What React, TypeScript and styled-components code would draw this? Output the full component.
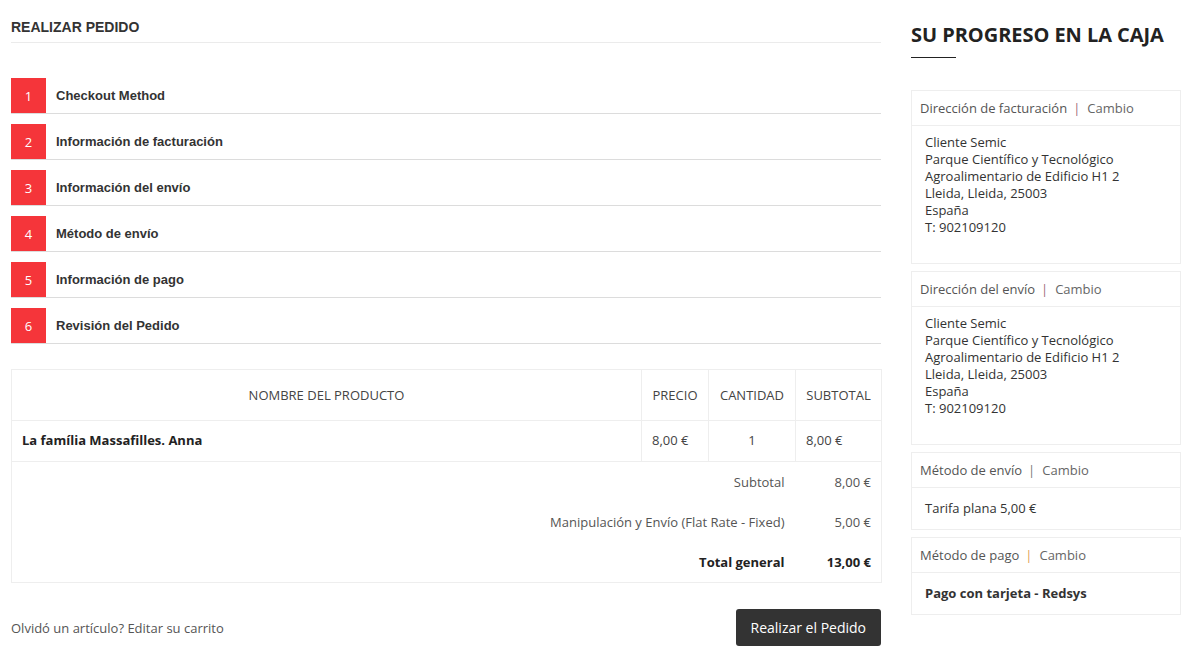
import React from 'react';
import styled, { createGlobalStyle } from 'styled-components';

const GlobalStyle = createGlobalStyle`
  body {
    margin: 0;
    background: #fff;
    font-family: 'Open Sans', 'Liberation Sans', sans-serif;
    font-size: 13px;
    color: #333;
  }
`;

const steps = [
  'Checkout Method',
  'Información de facturación',
  'Información del envío',
  'Método de envío',
  'Información de pago',
  'Revisión del Pedido',
];

const address = [
  'Cliente Semic',
  'Parque Científico y Tecnológico',
  'Agroalimentario de Edificio H1 2',
  'Lleida, Lleida, 25003',
  'España',
  'T: 902109120',
];

const App = () => (
  <>
    <GlobalStyle />
    <Page>
      <Main>
        <PageTitle>Realizar Pedido</PageTitle>
        <Steps>
          {steps.map((label, i) => (
            <Step key={label}>
              <StepNumber>{i + 1}</StepNumber>
              <StepTitle>{label}</StepTitle>
            </Step>
          ))}
        </Steps>

        <ReviewTable>
          <colgroup>
            <col style={{ width: 630 }} />
            <col style={{ width: 67 }} />
            <col style={{ width: 87 }} />
            <col style={{ width: 86 }} />
          </colgroup>
          <thead>
            <tr>
              <HeadCell>Nombre del producto</HeadCell>
              <HeadCell>Precio</HeadCell>
              <HeadCell>Cantidad</HeadCell>
              <HeadCell>Subtotal</HeadCell>
            </tr>
          </thead>
          <tbody>
            <tr>
              <BodyCell>
                <ProductName>La família Massafilles. Anna</ProductName>
              </BodyCell>
              <BodyCell>8,00 €</BodyCell>
              <BodyCell $center>1</BodyCell>
              <BodyCell>8,00 €</BodyCell>
            </tr>
          </tbody>
          <tfoot>
            <TotalRow label="Subtotal" value="8,00 €" />
            <TotalRow label="Manipulación y Envío (Flat Rate - Fixed)" value="5,00 €" />
            <TotalRow label="Total general" value="13,00 €" strong />
          </tfoot>
        </ReviewTable>

        <Actions>
          <Forgot>
            Olvidó un artículo? <EditLink href="#">Editar su carrito</EditLink>
          </Forgot>
          <PlaceOrder type="button">Realizar el Pedido</PlaceOrder>
        </Actions>
      </Main>

      <Sidebar>
        <SideTitle>Su progreso en la caja</SideTitle>
        <Blocks>
          <Block>
            <BlockHead>
              Dirección de facturación<Sep>|</Sep><ChangeLink href="#">Cambio</ChangeLink>
            </BlockHead>
            <AddressBody>
              {address.map((l) => (
                <div key={l}>{l}</div>
              ))}
            </AddressBody>
          </Block>
          <Block>
            <BlockHead>
              Dirección del envío<Sep>|</Sep><ChangeLink href="#">Cambio</ChangeLink>
            </BlockHead>
            <AddressBody>
              {address.map((l) => (
                <div key={l}>{l}</div>
              ))}
            </AddressBody>
          </Block>
          <Block>
            <BlockHead>
              Método de envío<Sep $tone="#777">|</Sep><ChangeLink href="#">Cambio</ChangeLink>
            </BlockHead>
            <LineBody>Tarifa plana 5,00 €</LineBody>
          </Block>
          <Block>
            <BlockHead>
              Método de pago<Sep $tone="#e0a050">|</Sep><ChangeLink href="#">Cambio</ChangeLink>
            </BlockHead>
            <LineBody $bold>Pago con tarjeta - Redsys</LineBody>
          </Block>
        </Blocks>
      </Sidebar>
    </Page>
  </>
);

const TotalRow = ({ label, value, strong }: { label: string; value: string; strong?: boolean }) => (
  <tr>
    <FootLabel colSpan={3} $strong={strong}>{label}</FootLabel>
    <FootValue $strong={strong}>{value}</FootValue>
  </tr>
);

const Page = styled.div`
  display: flex;
  gap: 30px;
  padding: 0 11px;
  width: 1192px;
  box-sizing: border-box;
`;

const Main = styled.div`
  width: 870px;
  flex-shrink: 0;
`;

const PageTitle = styled.h1`
  margin: 0;
  padding: 19px 0 7px;
  font-family: 'Liberation Sans', Arial, sans-serif;
  font-size: 14px;
  line-height: 16px;
  font-weight: 700;
  text-transform: uppercase;
  color: #333;
  border-bottom: 1px solid #ebebeb;
`;

const Steps = styled.ol`
  list-style: none;
  margin: 35px 0 0;
  padding: 0;
  display: flex;
  flex-direction: column;
  gap: 10px;
`;

const Step = styled.li`
  display: flex;
  align-items: center;
  height: 35px;
  border-bottom: 1px solid #dcdcdc;
`;

const StepNumber = styled.span`
  width: 35px;
  height: 35px;
  display: flex;
  align-items: center;
  justify-content: center;
  background: #f5353a;
  color: #fff;
  font-size: 13px;
`;

const StepTitle = styled.span`
  padding-left: 10px;
  font-family: 'Liberation Sans', Arial, sans-serif;
  font-weight: 700;
  font-size: 13px;
  color: #333;
`;

const ReviewTable = styled.table`
  margin-top: 25px;
  width: 870px;
  table-layout: fixed;
  border-collapse: collapse;
  border: 1px solid #eee;
  font-size: 13px;
`;

const HeadCell = styled.th`
  height: 50px;
  padding: 0 10px;
  font-weight: 400;
  text-transform: uppercase;
  text-align: center;
  color: #444;
  border: 1px solid #eee;
  white-space: nowrap;
`;

const BodyCell = styled.td<{ $center?: boolean }>`
  height: 37px;
  padding: 0 10px 3px;
  color: #444;
  text-align: ${({ $center }) => ($center ? 'center' : 'left')};
  border: 1px solid #eee;
  vertical-align: middle;
`;

const ProductName = styled.strong`
  color: #222;
  font-weight: 700;
`;

const FootLabel = styled.td<{ $strong?: boolean }>`
  height: 40px;
  padding: 0 11px;
  text-align: right;
  color: ${({ $strong }) => ($strong ? '#222' : '#555')};
  font-weight: ${({ $strong }) => ($strong ? 700 : 400)};
`;

const FootValue = styled(FootLabel)`
  padding: 0 10px;
`;

const Actions = styled.div`
  margin-top: 26px;
  display: flex;
  align-items: center;
  justify-content: space-between;
`;

const Forgot = styled.p`
  margin: 0;
  color: #555;
`;

const EditLink = styled.a`
  color: #555;
  text-decoration: none;
`;

const PlaceOrder = styled.button`
  height: 37px;
  padding: 0 15px;
  border: none;
  border-radius: 3px;
  background: #333;
  color: #fff;
  font-family: 'Open Sans', sans-serif;
  font-size: 14px;
  cursor: pointer;
`;

const Sidebar = styled.aside`
  width: 270px;
  flex-shrink: 0;
`;

const SideTitle = styled.h2`
  margin: 0;
  padding: 22px 0 0;
  font-size: 20px;
  line-height: 26px;
  font-weight: 700;
  text-transform: uppercase;
  color: #222;
  letter-spacing: -0.05px;
  &::after {
    content: '';
    display: block;
    width: 45px;
    height: 1px;
    margin-top: 9px;
    background: #222;
  }
`;

const Blocks = styled.div`
  margin-top: 32px;
  display: flex;
  flex-direction: column;
  gap: 7px;
`;

const Block = styled.section`
  border: 1px solid #eee;
`;

const BlockHead = styled.div`
  height: 34px;
  display: flex;
  align-items: center;
  padding: 0 8px;
  border-bottom: 1px solid #eee;
  color: #555;
`;

const Sep = styled.span<{ $tone?: string }>`
  color: ${({ $tone }) => $tone || '#a06a7a'};
  margin: 0 7px 0 6px;
`;

const ChangeLink = styled.a`
  color: #666;
  text-decoration: none;
`;

const AddressBody = styled.address`
  font-style: normal;
  padding: 8px 13px 27px;
  line-height: 17px;
  color: #333;
`;

const LineBody = styled.div<{ $bold?: boolean }>`
  padding: 12px 13px 12px;
  line-height: 17px;
  color: #333;
  font-weight: ${({ $bold }) => ($bold ? 700 : 400)};
`;

export default App;
